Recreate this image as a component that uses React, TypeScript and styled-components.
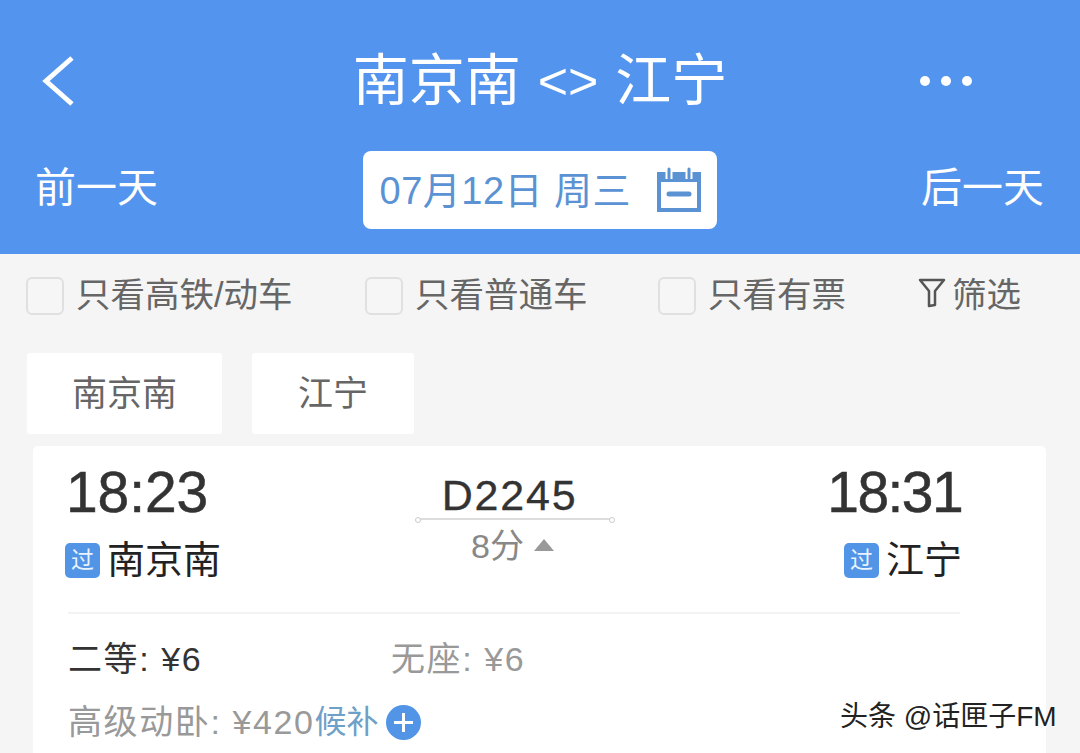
import React from "react";
import styled, { createGlobalStyle } from "styled-components";

const Global = createGlobalStyle`
  html, body { margin: 0; padding: 0; background: #f5f5f5; }
  body { font-family: "Liberation Sans", "Noto Sans CJK SC", sans-serif; }
`;

const Page = styled.div`
  position: relative;
  width: 1080px;
  height: 753px;
  overflow: hidden;
  background: #f5f5f5;
`;

const Header = styled.header`
  height: 254px;
  background: #5294ee;
  color: #fff;
`;

const TitleRow = styled.div`
  height: 151px;
  display: grid;
  grid-template-columns: 1fr auto 1fr;
  align-items: center;
  padding-top: 11px;
  box-sizing: border-box;
`;

const BackButton = styled.div`
  padding-left: 40px;
  display: flex;
`;

const Title = styled.h1`
  margin: 0;
  font-size: 56px;
  line-height: 64px;
  font-weight: 400;
  display: flex;
  gap: 17px;
  align-items: center;
`;

const Arrows = styled.span`
  font-size: 52px;
  letter-spacing: 0;
`;

const MoreDots = styled.div`
  justify-self: end;
  padding-right: 108px;
  display: flex;
  gap: 11px;
`;

const Dot = styled.span`
  width: 10px;
  height: 10px;
  border-radius: 50%;
  background: #fff;
`;

const DateRow = styled.div`
  display: flex;
  align-items: center;
  justify-content: space-between;
  padding: 0 36px 0 35px;
  height: 78px;
`;

const DayLink = styled.span`
  font-size: 41px;
  line-height: 48px;
  width: 123px;
  padding-bottom: 4px;
`;

const DatePill = styled.div`
  width: 354px;
  height: 78px;
  box-sizing: border-box;
  padding: 0 15px 0 17px;
  background: #fff;
  border-radius: 8px;
  color: #5b92d4;
  display: flex;
  align-items: center;
  justify-content: space-between;
  font-size: 38px;
`;

const DateText = styled.span`
  white-space: pre;
  padding-bottom: 6px;
  letter-spacing: 0.5px;
`;

const FilterRow = styled.div`
  height: 98px;
  box-sizing: border-box;
  padding: 0 0 14px 26px;
  display: grid;
  grid-template-columns: 339px 293px 260px auto;
  align-items: center;
  color: #666;
  font-size: 34.5px;
`;

const FilterItem = styled.label`
  display: flex;
  align-items: center;
  gap: 12px;
  white-space: nowrap;
`;

const FilterLabel = styled.span`
  padding-bottom: 8px;
`;

const Check = styled.span`
  width: 38px;
  height: 38px;
  box-sizing: border-box;
  border: 2px solid #e0e0e0;
  border-radius: 6px;
  background: #f6f6f6;
  flex: none;
`;

const FilterButton = styled.div`
  display: flex;
  align-items: center;
  gap: 6px;
  white-space: nowrap;
`;

const TabRow = styled.div`
  display: flex;
  gap: 30px;
  padding-left: 27px;
  height: 81px;
  margin-top: 1px;
`;

const Tab = styled.div<{ $w: number }>`
  width: ${(p) => p.$w}px;
  background: #fff;
  color: #666;
  font-size: 35px;
  border-radius: 3px;
  display: flex;
  align-items: center;
  justify-content: center;
  padding-bottom: 6px;
  box-sizing: border-box;
`;

const Card = styled.section`
  margin: 12px 34px 0 33px;
  height: 320px;
  box-sizing: border-box;
  background: #fff;
  border-radius: 5px 5px 0 0;
  padding: 0 84px 0 33px;
`;

const TrainRow = styled.div`
  display: flex;
  justify-content: space-between;
  height: 166px;
`;

const Divider = styled.div`
  height: 2px;
  margin: 0 2px;
  background: #f3f3f3;
`;

const Stop = styled.div<{ $end?: boolean }>`
  display: flex;
  flex-direction: column;
  align-items: ${(p) => (p.$end ? "flex-end" : "flex-start")};
  width: 200px;
`;

const Time = styled.div<{ $tight?: boolean }>`
  font-size: 57px;
  line-height: 64px;
  margin-top: 14px;
  color: #333;
  -webkit-text-stroke: 0.5px #333;
  letter-spacing: ${(p) => (p.$tight ? "-1.6px" : "-0.1px")};
`;

const Station = styled.div`
  display: flex;
  align-items: center;
  gap: 7px;
  margin-top: 14px;
  font-size: 38px;
  line-height: 44px;
  color: #222;
  white-space: nowrap;
`;

const Badge = styled.span`
  width: 35px;
  height: 35px;
  margin-left: -1px;
  border-radius: 5px;
  background: #5294e6;
  color: #e8f3ff;
  font-size: 23px;
  display: flex;
  align-items: center;
  justify-content: center;
`;

const Middle = styled.div`
  width: 200px;
  margin-top: 26px;
  margin-left: -9px;
  display: flex;
  flex-direction: column;
  align-items: center;
  color: #333;
`;

const TrainNo = styled.div`
  font-size: 43px;
  line-height: 46px;
  letter-spacing: 1.8px;
  -webkit-text-stroke: 0.3px #333;
`;

const RouteLine = styled.div`
  position: relative;
  width: 194px;
  height: 2px;
  margin-left: 10px;
  background: #ddd;
  &::before,
  &::after {
    content: "";
    position: absolute;
    top: -1px;
    width: 4px;
    height: 4px;
    border-radius: 50%;
    background: #fff;
    border: 1px solid #ccc;
  }
  &::before { left: -3px; }
  &::after { right: -3px; }
`;

const Duration = styled.div`
  display: flex;
  align-items: center;
  gap: 10px;
  color: #888;
  font-size: 34px;
  line-height: 48px;
  margin-top: 2px;
  margin-left: 6px;
`;

const Triangle = styled.span`
  width: 0;
  height: 0;
  border-left: 10px solid transparent;
  border-right: 10px solid transparent;
  border-bottom: 12px solid #999;
  margin-top: -2px;
`;

const Fares = styled.div`
  padding: 21px 0 0 2px;
  display: flex;
  flex-direction: column;
  gap: 15px;
`;

const FareLine = styled.div`
  display: flex;
  align-items: center;
  height: 48px;
`;

const Fare = styled.span<{ $on?: boolean; $w?: number }>`
  font-size: 34px;
  line-height: 48px;
  color: ${(p) => (p.$on ? "#333" : "#999")};
  ${(p) => (p.$w ? `width: ${p.$w}px;` : "")}
  white-space: nowrap;
  letter-spacing: 1.6px;
`;

const Waitlist = styled.span`
  font-size: 32px;
  line-height: 48px;
  color: #6fa0c8;
`;

const PlusIcon = styled.span`
  width: 35px;
  height: 35px;
  margin-left: 7px;
  display: flex;
`;

const Watermark = styled.div`
  position: absolute;
  left: 840px;
  top: 701px;
  font-size: 28px;
  line-height: 32px;
  color: #222;
  white-space: nowrap;
  text-shadow: 0 0 2px #fff, 1px 1px 0 #fff;
`;

const Calendar = () => (
  <svg width="46" height="46" viewBox="0 0 46 46" fill="none">
    <path d="M3 7h40v36H3z" stroke="#5b92d4" strokeWidth="4" />
    <path d="M3 6h40v9H3z" fill="#5b92d4" />
    <path d="M13 1v11M33 1v11" stroke="#fff" strokeWidth="7" />
    <path d="M13 2v9M33 2v9" stroke="#5b92d4" strokeWidth="3" strokeLinecap="round" />
    <path d="M13 27h20" stroke="#5b92d4" strokeWidth="5" strokeLinecap="round" />
  </svg>
);

const Funnel = () => (
  <svg width="28" height="30" viewBox="0 0 28 30" fill="none" stroke="#555" strokeWidth="2.5" strokeLinejoin="round" style={{ marginBottom: 6 }}>
    <path d="M2 2h24L17 13v14l-6 1V13z" fill="none" />
  </svg>
);

export default function App() {
  return (
    <Page>
      <Global />
      <Header>
        <TitleRow>
          <BackButton>
            <svg width="36" height="52" viewBox="0 0 36 52" fill="none">
              <path d="M32 3L6 26l26 23" stroke="#fff" strokeWidth="5" />
            </svg>
          </BackButton>
          <Title>
            <span>南京南</span>
            <Arrows>{"<>"}</Arrows>
            <span>江宁</span>
          </Title>
          <MoreDots>
            <Dot />
            <Dot />
            <Dot />
          </MoreDots>
        </TitleRow>
        <DateRow>
          <DayLink>前一天</DayLink>
          <DatePill>
            <DateText>07月12日 周三</DateText>
            <Calendar />
          </DatePill>
          <DayLink>后一天</DayLink>
        </DateRow>
      </Header>
      <FilterRow>
        <FilterItem><Check /><FilterLabel>只看高铁/动车</FilterLabel></FilterItem>
        <FilterItem><Check /><FilterLabel>只看普通车</FilterLabel></FilterItem>
        <FilterItem><Check /><FilterLabel>只看有票</FilterLabel></FilterItem>
        <FilterButton><Funnel /><FilterLabel>筛选</FilterLabel></FilterButton>
      </FilterRow>
      <TabRow>
        <Tab $w={195}>南京南</Tab>
        <Tab $w={162}>江宁</Tab>
      </TabRow>
      <Card>
        <TrainRow>
          <Stop>
            <Time>18:23</Time>
            <Station><Badge>过</Badge>南京南</Station>
          </Stop>
          <Middle>
            <TrainNo>D2245</TrainNo>
            <RouteLine />
            <Duration>8分<Triangle /></Duration>
          </Middle>
          <Stop $end>
            <Time $tight>18:31</Time>
            <Station><Badge>过</Badge>江宁</Station>
          </Stop>
        </TrainRow>
        <Divider />
        <Fares>
          <FareLine>
            <Fare $on $w={323}>二等: ¥6</Fare>
            <Fare>无座: ¥6</Fare>
          </FareLine>
          <FareLine>
            <Fare>高级动卧: ¥420</Fare>
            <Waitlist>候补</Waitlist>
            <PlusIcon>
              <svg width="35" height="35" viewBox="0 0 35 35">
                <circle cx="17.5" cy="17.5" r="17.5" fill="#5294e6" />
                <path d="M8 17.5h19M17.5 8v19" stroke="#fff" strokeWidth="3" />
              </svg>
            </PlusIcon>
          </FareLine>
        </Fares>
      </Card>
      <Watermark>头条 @话匣子FM</Watermark>
    </Page>
  );
}
